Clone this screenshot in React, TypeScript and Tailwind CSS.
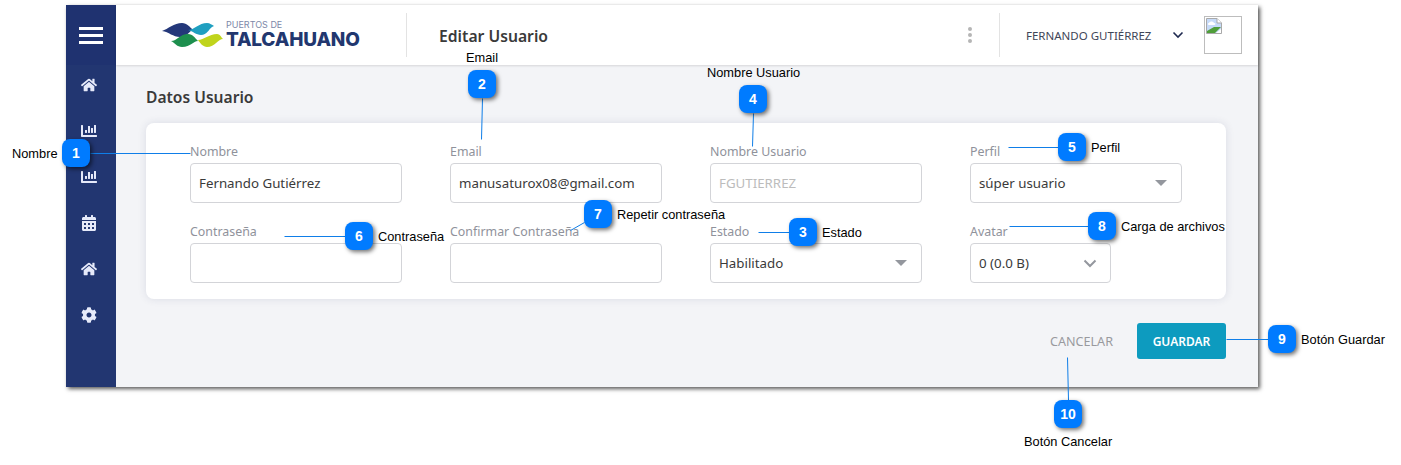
import { FaHome, FaChartBar, FaCalendarAlt, FaCog } from 'react-icons/fa'

const sideIcons = [FaHome, FaChartBar, FaChartBar, FaCalendarAlt, FaHome, FaCog]

const callouts = [
  { n: 1, badge: 'left-[62px] top-[139px]' },
  { n: 2, badge: 'left-[468px] top-[70px]' },
  { n: 3, badge: 'left-[789px] top-[218px]' },
  { n: 4, badge: 'left-[739px] top-[85px]' },
  { n: 5, badge: 'left-[1058px] top-[133px]' },
  { n: 6, badge: 'left-[345px] top-[222px]' },
  { n: 7, badge: 'left-[584px] top-[200px]' },
  { n: 8, badge: 'left-[1088px] top-[212px]' },
  { n: 9, badge: 'left-[1268px] top-[325px]' },
  { n: 10, badge: 'left-[1054px] top-[400px]' },
]

const notes = [
  { text: 'Nombre', pos: 'left-[12px] top-[146px]' },
  { text: 'Email', pos: 'left-[466px] top-[50px]' },
  { text: 'Estado', pos: 'left-[822px] top-[225px]' },
  { text: 'Nombre Usuario', pos: 'left-[707px] top-[65px]' },
  { text: 'Perfil', pos: 'left-[1091px] top-[140px]' },
  { text: 'Contraseña', pos: 'left-[378px] top-[229px]' },
  { text: 'Repetir contraseña', pos: 'left-[617px] top-[207px]' },
  { text: 'Carga de archivos', pos: 'left-[1121px] top-[219px]' },
  { text: 'Botón Guardar', pos: 'left-[1301px] top-[332px]' },
  { text: 'Botón Cancelar', pos: 'left-[1024px] top-[434px]' },
]

const lines = [
  [90, 153, 190, 153],
  [482, 98, 481, 139],
  [758, 232, 789, 232],
  [753, 113, 752, 146],
  [1008, 147, 1058, 147],
  [284, 236, 345, 236],
  [584, 222, 570, 230],
  [1009, 226, 1088, 226],
  [1226, 339, 1268, 339],
  [1067, 357, 1068, 400],
]

function Logo() {
  return (
    <div className="flex items-center ml-[44px] w-[246px]">
      <svg width="66" height="30" viewBox="0 0 66 30">
        <path d="M2 11C8 9 14 3 22 3C27 3 30 7 33 10C29 11 27 17 20 17C13 17 9 12 2 11Z" fill="#24387a" />
        <path d="M28 10C34 10 39 3 47 3C50 3 52 5 54 6L52 7C49 9 47 15 41 15C36 15 33 11 28 10Z" fill="#1f9fc0" />
        <path d="M11 21C17 21 20 14 28 14C33 14 35 18 38 21C33 21 31 27 22 27C17 27 15 23 11 21Z" fill="#1d8f4e" />
        <path d="M38 20C44 20 49 14 57 14C60 14 61 17 63 19C58 19 55 27 47 27C43 27 40 23 38 20Z" fill="#c0d41c" />
      </svg>
      <div className="flex flex-col font-['Inter',sans-serif] text-[#22376f] -mt-[1px]">
        <span className="text-[9px] leading-[10px] text-[#7d88a8]">PUERTOS DE</span>
        <span className="text-[19px] leading-[19px] font-extrabold tracking-[-0.2px]">TALCAHUANO</span>
      </div>
    </div>
  )
}

function BrokenImage() {
  return (
    <svg width="16" height="16" viewBox="0 0 16 16">
      <path d="M0.5 0.5H11L15.5 5V15.5H0.5Z" fill="#c6daf8" stroke="#a9a9a9" />
      <path d="M3 5C4 3 7 3 8 5C10 5 10 7 8 7H3C1.5 7 1.5 5 3 5Z" fill="#fff" />
      <path d="M1 15V13L8 9L15 9L9 15Z" fill="#4f9e3a" />
      <path d="M11 0.5V5H15.5" fill="#fff" stroke="#a9a9a9" />
      <path d="M10 15L15 11V15Z" fill="#fff" />
    </svg>
  )
}

function Field({ label, children }: { label: string; children: React.ReactNode }) {
  return (
    <div>
      <div className="h-[20px] mb-[2px] pt-[1px] text-[12.4px] leading-[20px] text-[#8f929b] whitespace-nowrap">{label}</div>
      {children}
    </div>
  )
}

function TextBox({ value = '', disabled = false }: { value?: string; disabled?: boolean }) {
  return (
    <input
      readOnly
      value={value}
      className={`block w-full h-[40px] px-[8px] border border-[#d3d4d8] rounded-[4px] bg-white text-[13.3px] outline-none ${
        disabled ? 'text-[#bcbcbc]' : 'text-[#3a3a3a]'
      }`}
    />
  )
}

function SelectBox({ value }: { value: string }) {
  return (
    <div className="flex items-center justify-between h-[40px] pl-[8px] pr-[14px] border border-[#d3d4d8] rounded-[4px] bg-white text-[13.3px] text-[#3a3a3a]">
      <span className="pt-[1px]">{value}</span>
      <span className="w-0 h-0 border-x-[6px] border-x-transparent border-t-[6px] border-t-[#94979e]" />
    </div>
  )
}

export default function App() {
  return (
    <div className="relative w-[1401px] h-[465px] overflow-hidden bg-white font-['Noto_Sans',sans-serif]">
      <div className="ml-[66px] pt-[5px]">
        <div className="flex w-[1192px] h-[382px] shadow-[2px_2px_4px_rgba(0,0,0,0.65)]">
          <aside className="w-[50px] shrink-0 bg-[#223671] flex flex-col items-center">
            <div className="w-full h-[60px] bg-[#1f3270] flex flex-col items-center justify-center gap-[4px]">
              <span className="block w-[24px] h-[3px] bg-white" />
              <span className="block w-[24px] h-[3px] bg-white" />
              <span className="block w-[24px] h-[3px] bg-white" />
            </div>
            <div className="flex flex-col items-center gap-[30px] pt-[12px] pr-[4px] text-[#e6eafa]">
              {sideIcons.map((Icon, i) => (
                <Icon key={i} size={16} />
              ))}
            </div>
          </aside>

          <div className="flex-1 flex flex-col bg-[#f3f4f7]">
            <header className="h-[60px] shrink-0 bg-white flex items-center shadow-[0_1px_2px_rgba(0,0,0,0.12)]">
              <Logo />
              <div className="h-[44px] border-l border-[#e3e3e3] pl-[32px] pt-[1px] text-[15.7px] font-semibold text-[#3a3a3a] leading-[44px] w-[562px]">
                Editar Usuario
              </div>
              <div className="flex flex-col gap-[2px] w-[31px]">
                <span className="w-[4px] h-[4px] rounded-full bg-[#b5b5b5]" />
                <span className="w-[4px] h-[4px] rounded-full bg-[#b5b5b5]" />
                <span className="w-[4px] h-[4px] rounded-full bg-[#b5b5b5]" />
              </div>
              <div className="h-[44px] border-l border-[#e3e3e3] pl-[26px] flex items-center w-[205px] text-[#3f4658]">
                <span className="text-[11.5px] w-[152px] pt-[1px] whitespace-nowrap">FERNANDO GUTIÉRREZ</span>
                <svg width="12" height="8" viewBox="0 0 12 8" className="ml-[-6px]">
                  <path d="M1.5 1.5L6 6L10.5 1.5" fill="none" stroke="#1f2a50" strokeWidth="1.6" />
                </svg>
              </div>
              <div className="w-[38px] h-[38px] border border-[#bdbdbd] p-[1px]">
                <BrokenImage />
              </div>
            </header>

            <main className="pl-[30px] pt-[21px] pr-[32px]">
              <h2 className="text-[15.6px] leading-[22px] font-semibold text-[#3a3a3a]">Datos Usuario</h2>
              <section className="mt-[15px] bg-white rounded-[8px] pl-[44px] pt-[18px] pb-[16px] h-[176px] shadow-[0_0_8px_rgba(40,50,100,0.12)]">
                <div className="grid grid-cols-[repeat(4,212px)] gap-x-[48px] gap-y-[18px]">
                  <Field label="Nombre">
                    <TextBox value="Fernando Gutiérrez" />
                  </Field>
                  <Field label="Email">
                    <TextBox value="manusaturox08@gmail.com" />
                  </Field>
                  <Field label="Nombre Usuario">
                    <TextBox value="FGUTIERREZ" disabled />
                  </Field>
                  <Field label="Perfil">
                    <SelectBox value="súper usuario" />
                  </Field>
                  <Field label="Contraseña">
                    <TextBox />
                  </Field>
                  <Field label="Confirmar Contraseña">
                    <TextBox />
                  </Field>
                  <Field label="Estado">
                    <SelectBox value="Habilitado" />
                  </Field>
                  <Field label="Avatar">
                    <div className="flex items-center justify-between w-[141px] h-[40px] pl-[8px] pr-[13px] border border-[#d3d4d8] rounded-[4px] bg-white text-[13.3px] text-[#3a3a3a]">
                      <span className="pt-[1px]">0 (0.0 B)</span>
                      <svg width="14" height="9" viewBox="0 0 14 9">
                        <path d="M1.5 1.5L7 7L12.5 1.5" fill="none" stroke="#94979e" strokeWidth="2" />
                      </svg>
                    </div>
                  </Field>
                </div>
              </section>
              <div className="flex justify-end items-center mt-[24px]">
                <button className="text-[12.6px] text-[#999a9e] mr-[24px] pt-[2px]">CANCELAR</button>
                <button className="w-[89px] h-[36px] pt-[1px] rounded-[3px] bg-[#0d9bbf] text-white text-[12px] font-semibold">
                  GUARDAR
                </button>
              </div>
            </main>
          </div>
        </div>
      </div>

      <svg className="absolute left-0 top-0 pointer-events-none" width="1401" height="465">
        <g transform="translate(0.5 0.5)">
          {lines.map(([x1, y1, x2, y2], i) => (
            <line key={i} x1={x1} y1={y1} x2={x2} y2={y2} stroke="#0f7ee8" strokeWidth="1" />
          ))}
        </g>
      </svg>

      {callouts.map(c => (
        <div
          key={c.n}
          className={`absolute ${c.badge} w-[28px] h-[28px] rounded-[8px] bg-[#007bff] text-white text-[14px] font-bold flex items-center justify-center font-['Liberation_Sans',sans-serif] shadow-[2px_2px_4px_rgba(0,0,0,0.55)]`}
        >
          {c.n}
        </div>
      ))}

      {notes.map(n => (
        <div
          key={n.text}
          className={`absolute ${n.pos} text-[12.8px] leading-[16px] text-black whitespace-nowrap font-['Liberation_Sans',sans-serif]`}
        >
          {n.text}
        </div>
      ))}
    </div>
  )
}
